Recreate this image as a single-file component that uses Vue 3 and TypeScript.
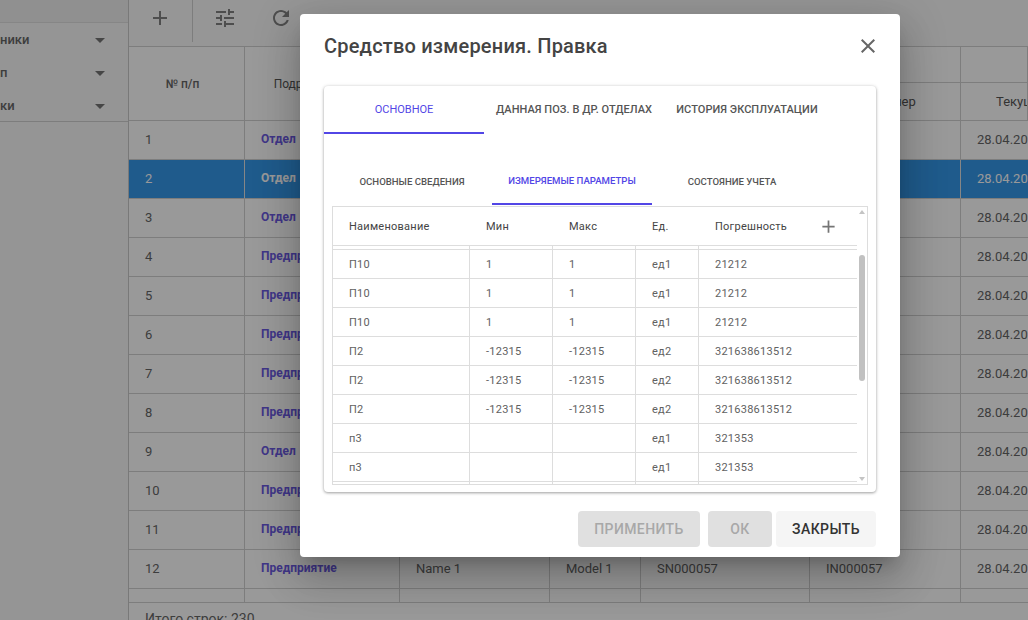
<script setup lang="ts">
interface BgRow { n: number; unit: string; sn: string; inv: string }
const units = ['Отдел', 'Отдел', 'Отдел', 'Предприятие', 'Предприятие', 'Предприятие', 'Предприятие', 'Предприятие', 'Отдел', 'Предприятие', 'Предприятие', 'Предприятие']
const bgRows: BgRow[] = units.map((unit, i) => ({
  n: i + 1,
  unit,
  sn: 'SN0000' + (46 + i),
  inv: 'IN0000' + (46 + i),
}))
const sideItems = ['ники', 'п', 'ки']
const params = [
  ['П10', '1', '1', 'ед1', '21212'],
  ['П10', '1', '1', 'ед1', '21212'],
  ['П10', '1', '1', 'ед1', '21212'],
  ['П2', '-12315', '-12315', 'ед2', '321638613512'],
  ['П2', '-12315', '-12315', 'ед2', '321638613512'],
  ['П2', '-12315', '-12315', 'ед2', '321638613512'],
  ['п3', '', '', 'ед1', '321353'],
  ['п3', '', '', 'ед1', '321353'],
]
</script>

<template>
  <div class="page">
    <aside class="side">
      <div class="side-head"></div>
      <div class="side-list">
        <div v-for="s in sideItems" :key="s" class="side-item">
          <span>{{ s }}</span>
          <svg class="drop" viewBox="0 0 24 24" width="24" height="24"><path d="M7 10l5 5 5-5z" /></svg>
        </div>
      </div>
    </aside>
    <main class="main">
      <div class="toolbar">
        <div class="tool-add">
          <svg viewBox="0 0 24 24" width="24" height="24"><path d="M19 13h-6v6h-2v-6H5v-2h6V5h2v6h6v2z" /></svg>
        </div>
        <div class="tool-rest">
          <svg viewBox="0 0 24 24" width="24" height="24"><path d="M3 17v2h6v-2H3zM3 5v2h10V5H3zm10 16v-2h8v-2h-8v-2h-2v6h2zM7 9v2H3v2h4v2h2V9H7zm14 4v-2H11v2h10zm-6-4h2V7h4V5h-4V3h-2v6z" /></svg>
          <svg viewBox="0 0 24 24" width="24" height="24"><path d="M17.65 6.35C16.2 4.9 14.21 4 12 4c-4.42 0-7.99 3.58-7.99 8s3.57 8 7.99 8c3.73 0 6.84-2.55 7.73-6h-2.08c-.82 2.33-3.04 4-5.65 4-3.31 0-6-2.69-6-6s2.69-6 6-6c1.66 0 3.14.69 4.22 1.78L13 11h7V4l-2.35 2.35z" /></svg>
        </div>
      </div>
      <div class="grid-head">
        <div class="hc h-n">№ п/п</div>
        <div class="hc h-u">Подразделение</div>
        <div class="hc h-group"></div>
        <div class="hc h-top"></div>
        <div class="hc h-low">Наименование</div>
        <div class="hc h-low">Модель</div>
        <div class="hc h-low">Серийный</div>
        <div class="hc h-low">Инв. номер</div>
        <div class="hc h-low h-cur">Текущая</div>
      </div>
      <div v-for="r in bgRows" :key="r.n" class="grid-row" :class="{ sel: r.n === 2 }">
        <div class="c">{{ r.n }}</div>
        <div class="c link">{{ r.unit }}</div>
        <div class="c">Name 1</div>
        <div class="c">Model 1</div>
        <div class="c">{{ r.sn }}</div>
        <div class="c">{{ r.inv }}</div>
        <div class="c">28.04.2020</div>
      </div>
      <div class="grid-row empty">
        <div class="c"></div><div class="c"></div><div class="c"></div><div class="c"></div><div class="c"></div><div class="c"></div><div class="c"></div>
      </div>
      <div class="foot">Итого строк: 230</div>
    </main>

    <div class="overlay">
      <section class="dialog">
        <header class="d-head">
          <h2>Средство измерения. Правка</h2>
          <svg viewBox="0 0 24 24" width="24" height="24"><path d="M19 6.41L17.59 5 12 10.59 6.41 5 5 6.41 10.59 12 5 17.59 6.41 19 12 13.41 17.59 19 19 17.59 13.41 12z" /></svg>
        </header>
        <div class="card">
          <nav class="tabs">
            <div class="tab t1 active">ОСНОВНОЕ</div>
            <div class="tab t2">ДАННАЯ ПОЗ. В ДР. ОТДЕЛАХ</div>
            <div class="tab t3">ИСТОРИЯ ЭКСПЛУАТАЦИИ</div>
          </nav>
          <nav class="subtabs">
            <div class="sub">ОСНОВНЫЕ СВЕДЕНИЯ</div>
            <div class="sub active">ИЗМЕРЯЕМЫЕ ПАРАМЕТРЫ</div>
            <div class="sub">СОСТОЯНИЕ УЧЕТА</div>
          </nav>
          <div class="tbl">
            <div class="tbl-body">
              <div class="p-head">
                <div class="pc">Наименование</div>
                <div class="pc">Мин</div>
                <div class="pc">Макс</div>
                <div class="pc">Ед.</div>
                <div class="pc p-last">
                  <span>Погрешность</span>
                  <svg viewBox="0 0 24 24" width="21" height="21"><path d="M19 13h-6v6h-2v-6H5v-2h6V5h2v6h6v2z" /></svg>
                </div>
              </div>
              <div class="p-row gap"><div class="pc" v-for="i in 5" :key="i"></div></div>
              <div v-for="(row, ri) in params" :key="ri" class="p-row">
                <div v-for="(v, ci) in row" :key="ci" class="pc">{{ v }}</div>
              </div>
              <div class="p-row gap"><div class="pc" v-for="i in 5" :key="i"></div></div>
            </div>
            <div class="sbar">
              <i class="arr up"></i>
              <b class="thumb"></b>
              <i class="arr down"></i>
            </div>
          </div>
        </div>
        <footer class="actions">
          <button class="btn off b1" disabled>ПРИМЕНИТЬ</button>
          <button class="btn off b2" disabled>ОК</button>
          <button class="btn b3">ЗАКРЫТЬ</button>
        </footer>
      </section>
    </div>
  </div>
</template>

<style scoped>
.page {
  position: relative;
  width: 1028px;
  height: 620px;
  overflow: hidden;
  display: flex;
  background: #fff;
  font-family: Roboto, "Noto Sans", sans-serif;
  color: #444;
}
.side {
  width: 128px;
  flex: none;
  border-right: 1px solid #c4c4c4;
  background: #f7f7f7;
}
.side-head {
  height: 23px;
  box-sizing: border-box;
  background: #eee;
  border-bottom: 1px solid #ddd;
}
.side-list {
  height: 99px;
  box-sizing: border-box;
  border-bottom: 1px solid #ccc;
}
.side-item {
  height: 33px;
  display: flex;
  align-items: center;
  justify-content: space-between;
  padding-right: 16px;
  font-size: 13px;
  font-weight: 500;
  color: #555;
}
.drop { fill: #666; }
.main {
  flex: 1;
  min-width: 0;
  display: flex;
  flex-direction: column;
}
.toolbar {
  height: 46px;
  flex: none;
  display: flex;
  border-bottom: 1px solid #ccc;
  background: #fafafa;
}
.toolbar svg { fill: #757575; }
.tool-add {
  width: 64px;
  height: 42px;
  padding: 6px 0 0 19px;
  box-sizing: border-box;
  border-right: 1px solid #ccc;
}
.tool-rest {
  display: flex;
  gap: 32px;
  padding: 6px 0 0 20px;
}
.grid-head {
  display: grid;
  flex: none;
  grid-template-columns: 116px 155px 150px 91px 169px 151px 1fr;
  grid-template-rows: 36px 37px;
  border-bottom: 1px solid #ccc;
  height: 74px;
  box-sizing: border-box;
  font-size: 12px;
  font-weight: 500;
  width: 899px;
}
.hc {
  display: flex;
  align-items: center;
  justify-content: center;
  border-right: 1px solid #ccc;
  white-space: nowrap;
  overflow: hidden;
  padding-right: 8px;
}
.h-n, .h-u { grid-row: 1 / 3; font-weight: 500; }
.h-n { color: #555; }
.h-u { font-weight: 400; color: #444; }
.h-group { grid-column: 3 / 7; border-bottom: 1px solid #ccc; }
.h-top { border-bottom: 1px solid #ccc; }
.h-low { font-weight: 400; font-size: 13px; }
.h-cur { justify-content: flex-start; padding-left: 35px; padding-right: 0; }
.grid-row {
  display: grid;
  flex: none;
  width: 899px;
  grid-template-columns: 116px 155px 150px 91px 169px 151px 1fr;
  height: 39px;
  box-sizing: border-box;
  border-bottom: 1px solid #ccc;
  font-size: 13px;
  color: #555;
}
.grid-row.empty { height: 14px; }
.c {
  display: flex;
  align-items: center;
  padding-left: 16px;
  padding-bottom: 2px;
  border-right: 1px solid #ccc;
  white-space: nowrap;
  overflow: hidden;
}
.c:last-child { border-right: 0; }
.link { color: #5b49e0; font-weight: 700; font-size: 12px; }
.sel { background: #1f8ce8; color: #fff; }
.sel .c { border-right-color: #ddd; }
.sel .link { color: #fff; }
.foot {
  padding: 8px 0 0 16px;
  font-size: 14px;
  color: #555;
  white-space: nowrap;
}
.overlay {
  position: absolute;
  inset: 0;
  background: rgba(33, 33, 33, 0.46);
  padding: 14px 0 0 300px;
  box-sizing: border-box;
}
.dialog {
  width: 600px;
  height: 543px;
  background: #fff;
  border-radius: 4px;
  box-shadow: 0 11px 15px -7px rgba(0, 0, 0, .2), 0 24px 38px 3px rgba(0, 0, 0, .14), 0 9px 46px 8px rgba(0, 0, 0, .12);
  padding: 0 24px;
  box-sizing: border-box;
}
.d-head {
  height: 64px;
  margin: 0 -4px 8px 0;
  display: flex;
  align-items: center;
  justify-content: space-between;
}
.d-head h2 {
  margin: 0;
  font-size: 20px;
  font-weight: 500;
  color: #444;
  letter-spacing: .2px;
}
.d-head svg { fill: #666; }
.card {
  height: 406px;
  border-radius: 4px;
  background: #fff;
  box-shadow: 0 1px 3px rgba(0, 0, 0, .35), 0 0 4px rgba(0, 0, 0, .08);
  display: flex;
  flex-direction: column;
}
.tabs {
  display: flex;
  height: 48px;
  flex: none;
}
.tab {
  display: flex;
  align-items: center;
  justify-content: center;
  padding-bottom: 2px;
  font-size: 11px;
  font-weight: 500;
  color: #555;
  white-space: nowrap;
  box-sizing: border-box;
  letter-spacing: .05px;
}
.t1 { width: 160px; }
.t2 { width: 180px; }
.t3 { width: 160px; margin-left: 3px; }
.tab.active { color: #5246e6; border-bottom: 2px solid #5246e6; padding-bottom: 0; font-weight: 400; letter-spacing: 0; }
.subtabs {
  display: flex;
  margin: 23px 0 0 8px;
  height: 48px;
  flex: none;
}
.sub {
  width: 160px;
  display: flex;
  align-items: center;
  justify-content: center;
  box-sizing: border-box;
  font-size: 9.6px;
  font-weight: 500;
  color: #555;
  white-space: nowrap;
}
.sub.active { color: #5246e6; border-bottom: 2px solid #5246e6; }
.tbl {
  margin: 1px 8px 0;
  height: 279px;
  box-sizing: border-box;
  border: 1px solid #ddd;
  display: flex;
  overflow: hidden;
}
.tbl-body {
  width: 524px;
  flex: none;
  overflow: hidden;
}
.p-head, .p-row {
  display: grid;
  grid-template-columns: 137px 83px 83px 63px 1fr;
  box-sizing: border-box;
  border-bottom: 1px solid #ddd;
  font-size: 11px;
  letter-spacing: .25px;
}
.p-head { height: 39px; color: #444; }
.p-row { height: 29px; color: #616161; }
.p-row.gap { height: 4px; }
.pc {
  display: flex;
  align-items: center;
  padding-left: 16px;
  white-space: nowrap;
}
.p-row .pc { border-right: 1px solid #ddd; }
.p-row .pc:last-child { border-right: 0; }
.p-last { justify-content: space-between; padding-right: 18px; }
.p-last svg { fill: #757575; }
.sbar {
  flex: 1;
  position: relative;
  background: #fff;
}
.thumb {
  position: absolute;
  left: 2px;
  top: 48px;
  width: 6px;
  height: 126px;
  border-radius: 3px;
  background: #c1c1c1;
}
.arr {
  position: absolute;
  left: 2px;
  width: 0;
  height: 0;
  border-left: 3px solid transparent;
  border-right: 3px solid transparent;
}
.up { top: 3px; border-bottom: 4px solid #c4c4c4; }
.down { bottom: 3px; border-top: 4px solid #c4c4c4; }
.actions {
  display: flex;
  justify-content: flex-end;
  margin-top: 19px;
}
.btn {
  height: 36px;
  border: 0;
  border-radius: 4px;
  font-family: inherit;
  font-size: 14px;
  font-weight: 500;
  letter-spacing: .4px;
  background: #f5f5f5;
  color: #333;
  padding: 0;
}
.off { background: #e0e0e0; color: #a8a8a8; }
.b1 { width: 122px; margin-right: 8px; }
.b2 { width: 64px; margin-right: 4px; }
.b3 { width: 100px; }
</style>
